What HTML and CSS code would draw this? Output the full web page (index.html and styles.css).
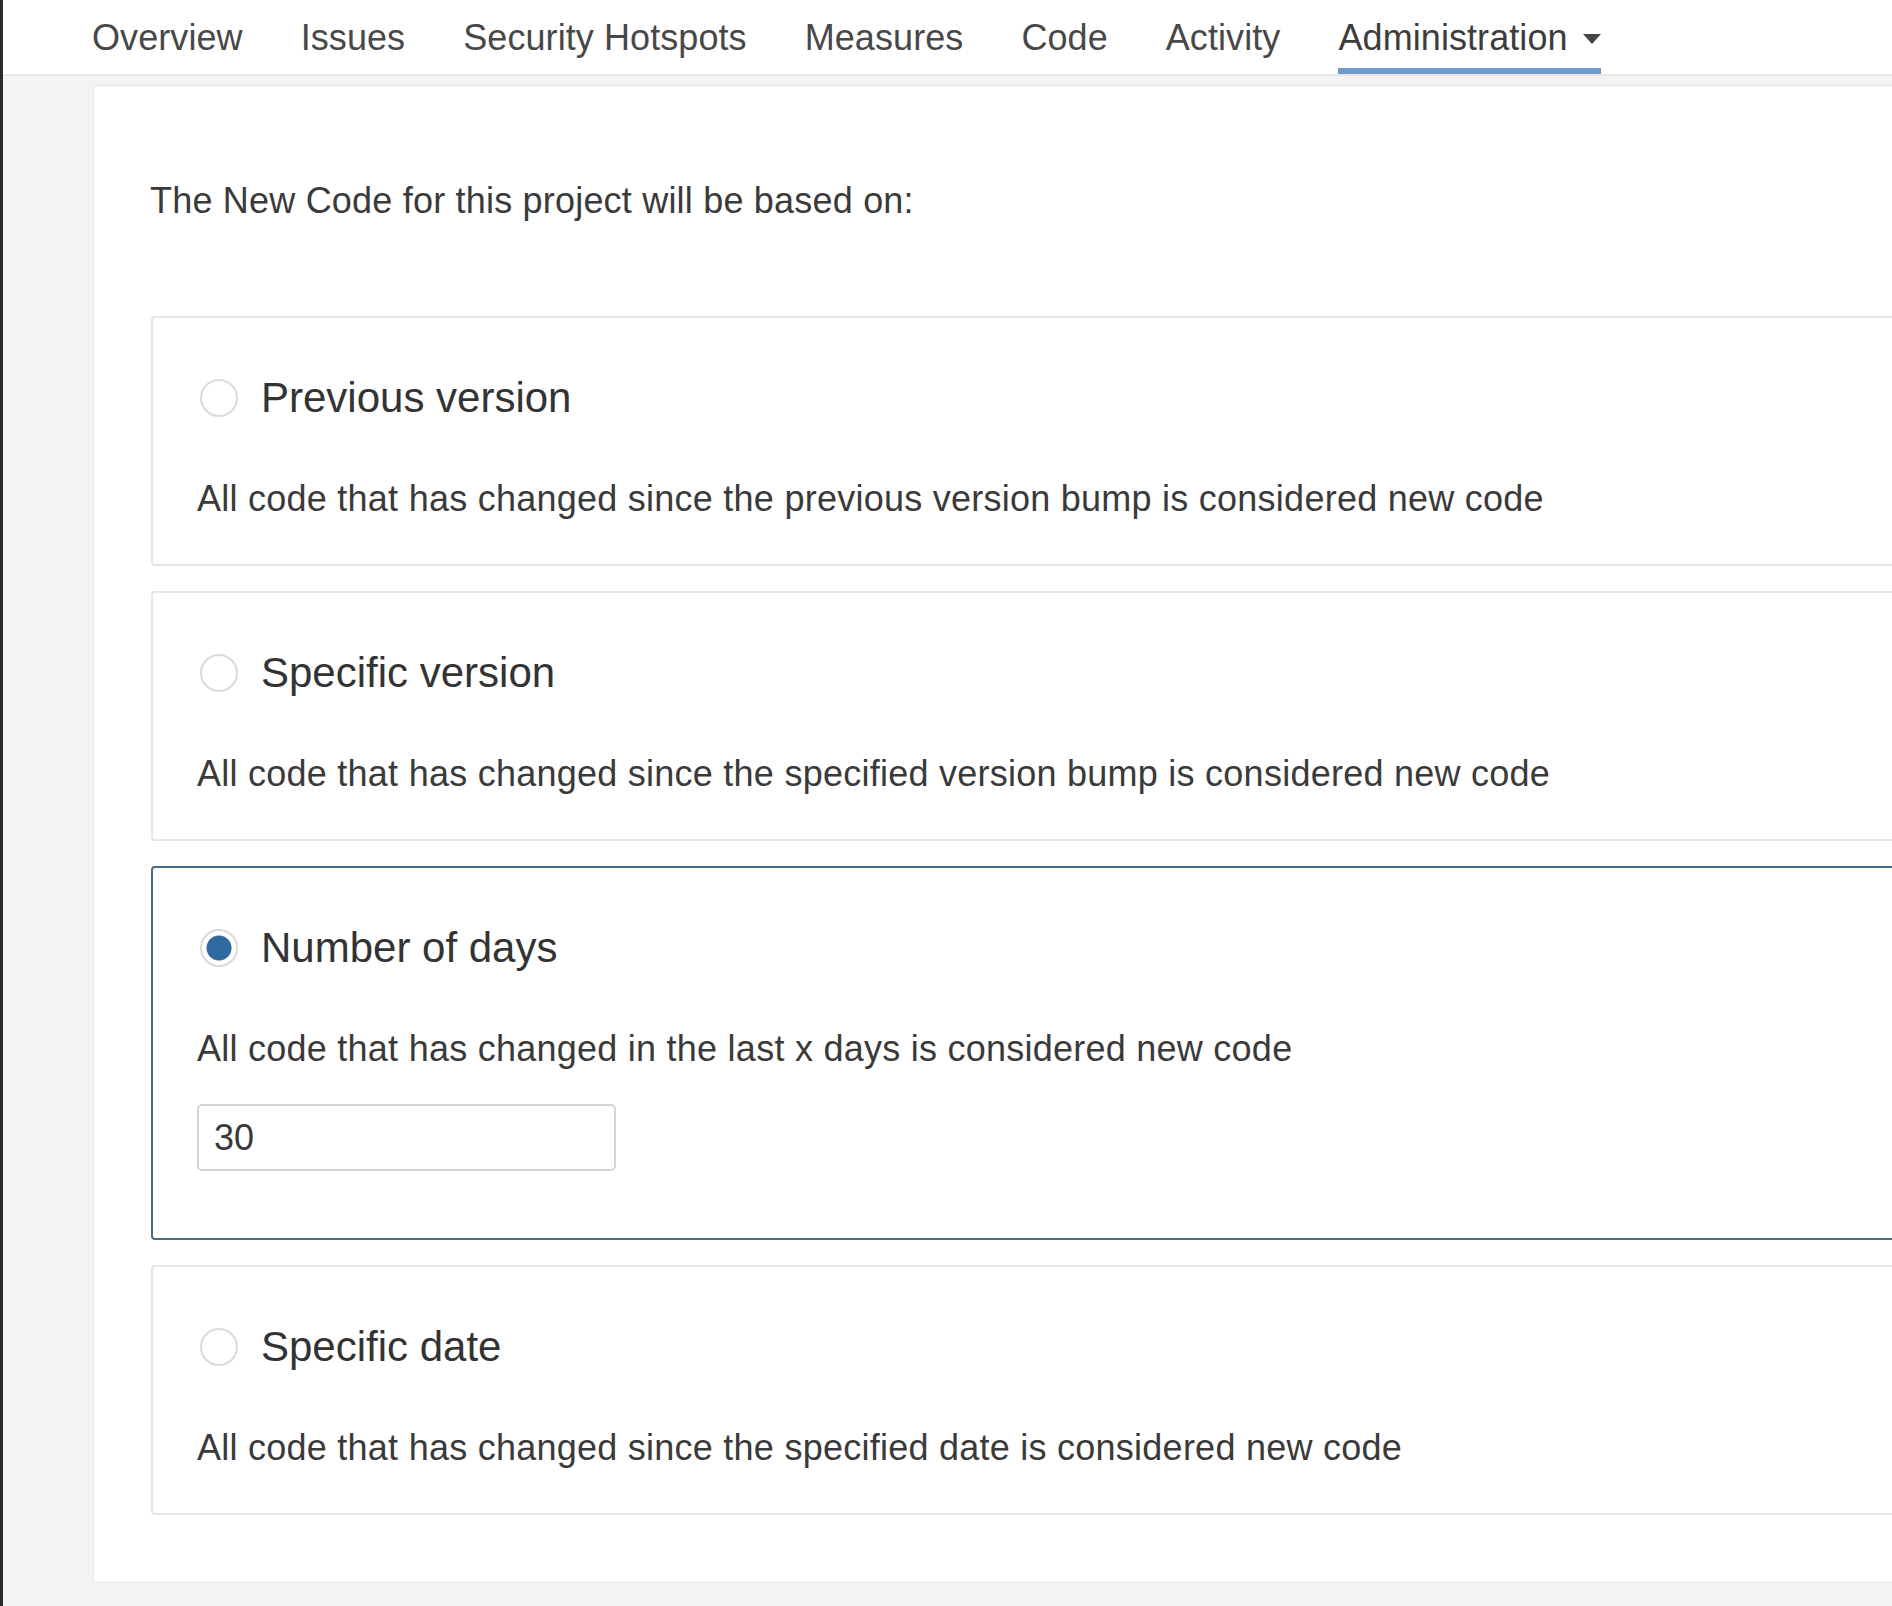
FILE: index.html
```html
<!DOCTYPE html>
<html lang="en">
<head>
<meta charset="utf-8">
<title>New Code</title>
<link rel="stylesheet" href="styles.css">
</head>
<body>
<div class="app">
  <nav class="tabs">
    <a class="tab">Overview</a>
    <a class="tab">Issues</a>
    <a class="tab">Security Hotspots</a>
    <a class="tab">Measures</a>
    <a class="tab">Code</a>
    <a class="tab">Activity</a>
    <a class="tab active">Administration<span class="caret"></span></a>
  </nav>
  <main class="page">
    <section class="panel">
      <p class="intro">The New Code for this project will be based on:</p>

      <div class="option">
        <div class="option-head"><span class="radio"></span><span class="option-title">Previous version</span></div>
        <p class="option-desc">All code that has changed since the previous version bump is considered new code</p>
      </div>

      <div class="option">
        <div class="option-head"><span class="radio"></span><span class="option-title">Specific version</span></div>
        <p class="option-desc">All code that has changed since the specified version bump is considered new code</p>
      </div>

      <div class="option selected">
        <div class="option-head"><span class="radio checked"></span><span class="option-title">Number of days</span></div>
        <p class="option-desc">All code that has changed in the last x days is considered new code</p>
        <input class="days-input" type="text" value="30">
      </div>

      <div class="option">
        <div class="option-head"><span class="radio"></span><span class="option-title">Specific date</span></div>
        <p class="option-desc">All code that has changed since the specified date is considered new code</p>
      </div>
    </section>
  </main>
</div>
</body>
</html>
```

FILE: styles.css
```css
html, body {
  margin: 0;
  padding: 0;
}

body {
  font-family: "Liberation Sans", Arial, sans-serif;
  color: #333;
  background: #f3f3f3;
}

.app {
  border-left: 3px solid #2a2a2a;
  min-height: 1606px;
  box-sizing: border-box;
  overflow: hidden;
}

.tabs {
  display: flex;
  gap: 58px;
  height: 74px;
  padding-left: 89px;
  background: #fff;
  border-bottom: 2px solid #e8e8e8;
}

.tab {
  display: flex;
  align-items: center;
  box-sizing: border-box;
  height: 74px;
  padding-top: 17px;
  padding-bottom: 9px;
  border-bottom: 6px solid transparent;
  font-size: 36px;
  line-height: 42px;
  letter-spacing: 0.08px;
  color: #484848;
  white-space: nowrap;
}

.tab.active {
  border-bottom-color: #6d9ac9;
  color: #3c3c3c;
}

.caret {
  display: inline-block;
  width: 0;
  height: 0;
  margin-left: 15px;
  margin-top: 2px;
  border-left: 9px solid transparent;
  border-right: 9px solid transparent;
  border-top: 10px solid #444;
}

.page {
  padding: 9px 0 0 90px;
}

.panel {
  margin-right: -300px;
  background: #fff;
  border: 1px solid #e6e6e6;
  padding: 94px 0 67px 56px;
}

.intro {
  margin: 0 0 94px;
  font-size: 36px;
  line-height: 42px;
  letter-spacing: 0.2px;
  color: #3a3a3a;
}

.option {
  border: 2px solid #e6e6e6;
  border-radius: 4px;
  padding: 56px 0 44px 44px;
  margin: 0 0 25px 1px;
  background: #fff;
}

.option:last-child {
  margin-bottom: 0;
}

.option.selected {
  border-color: #4d6b7f;
}

.option-head {
  display: flex;
  align-items: center;
  height: 48px;
}

.radio {
  flex: none;
  box-sizing: border-box;
  width: 38px;
  height: 38px;
  margin-left: 3px;
  border: 2px solid #dadada;
  border-radius: 50%;
  background: #fff;
}

.radio.checked {
  background: radial-gradient(circle, #2f6aa1 0, #2f6aa1 12px, #fff 13px);
}

.option-title {
  margin-left: 23px;
  font-size: 42px;
  line-height: 48px;
  color: #333;
}

.option-desc {
  margin: 56px 0 0;
  font-size: 36px;
  line-height: 42px;
  letter-spacing: 0.25px;
  color: #3a3a3a;
}

.days-input {
  display: block;
  box-sizing: border-box;
  width: 419px;
  height: 67px;
  margin: 34px 0 23px;
  padding: 0 15px;
  border: 2px solid #d4d4d4;
  border-radius: 5px;
  font-family: "Liberation Sans", Arial, sans-serif;
  font-size: 36px;
  color: #3a3a3a;
  background: #fff;
  outline: none;
}
```
